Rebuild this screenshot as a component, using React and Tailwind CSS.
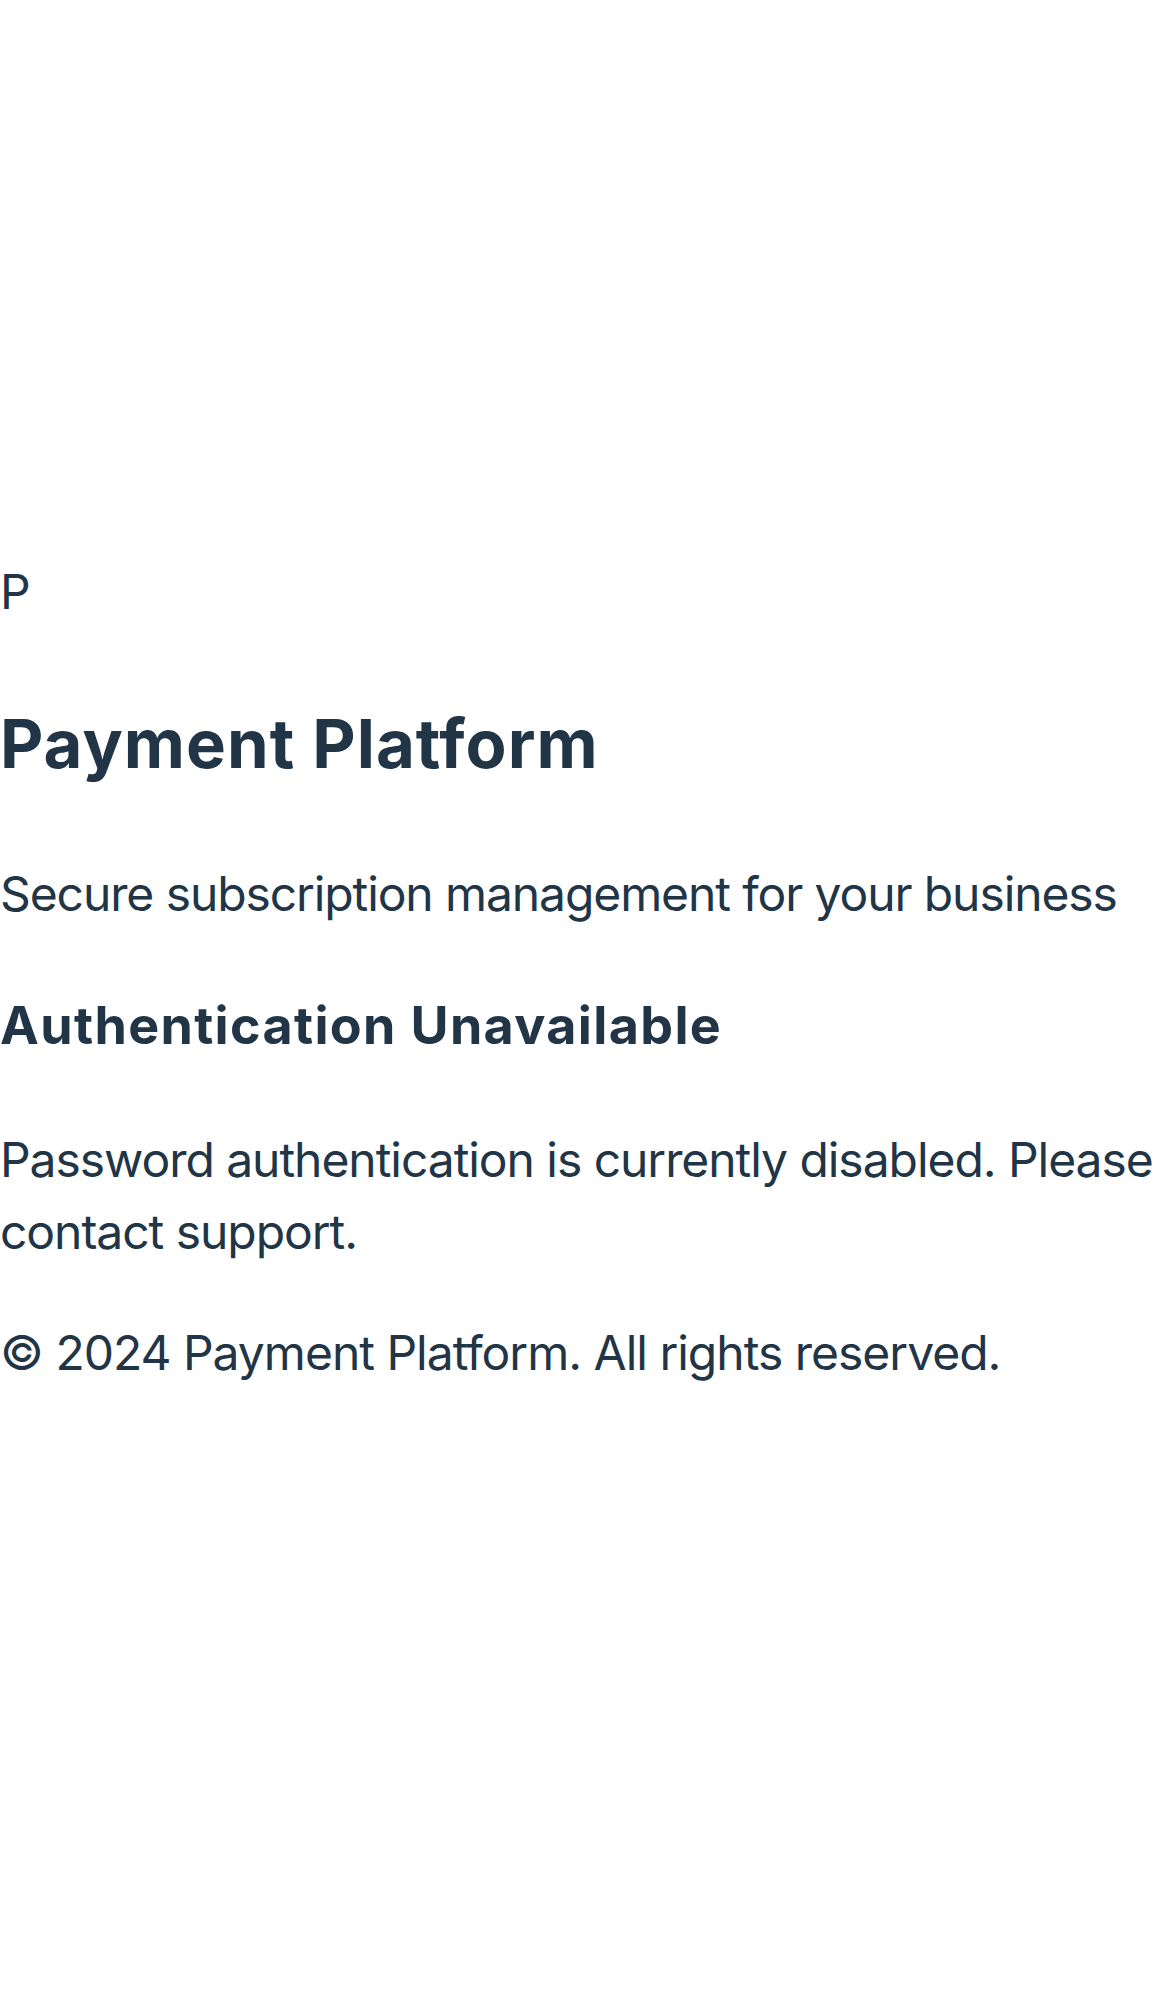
export default function App() {
  return (
    <div
      className="min-h-screen bg-white pt-[556px] text-[#213547]"
      style={{ fontFamily: "Inter, 'Noto Sans', sans-serif" }}
    >
      <div className="text-[48px] leading-[72px]">P</div>
      <h1 className="mt-[66px] text-[67px] font-bold leading-[100px] tracking-[1.05px]">Payment Platform</h1>
      <p className="mt-[64px] text-[48px] leading-[72px] tracking-[-1.1px]">
        Secure subscription management for your business
      </p>
      <h2 className="mt-[57px] text-[52px] font-bold leading-[78px] tracking-[1.35px]">Authentication Unavailable</h2>
      <p className="mt-[59px] text-[48px] leading-[72px] tracking-[-1.05px]">
        Password authentication is currently disabled. Please contact support.
      </p>
      <p className="mt-[49px] text-[48px] leading-[72px] tracking-[-1px]">
        © 2024 Payment Platform. All rights reserved.
      </p>
    </div>
  );
}
